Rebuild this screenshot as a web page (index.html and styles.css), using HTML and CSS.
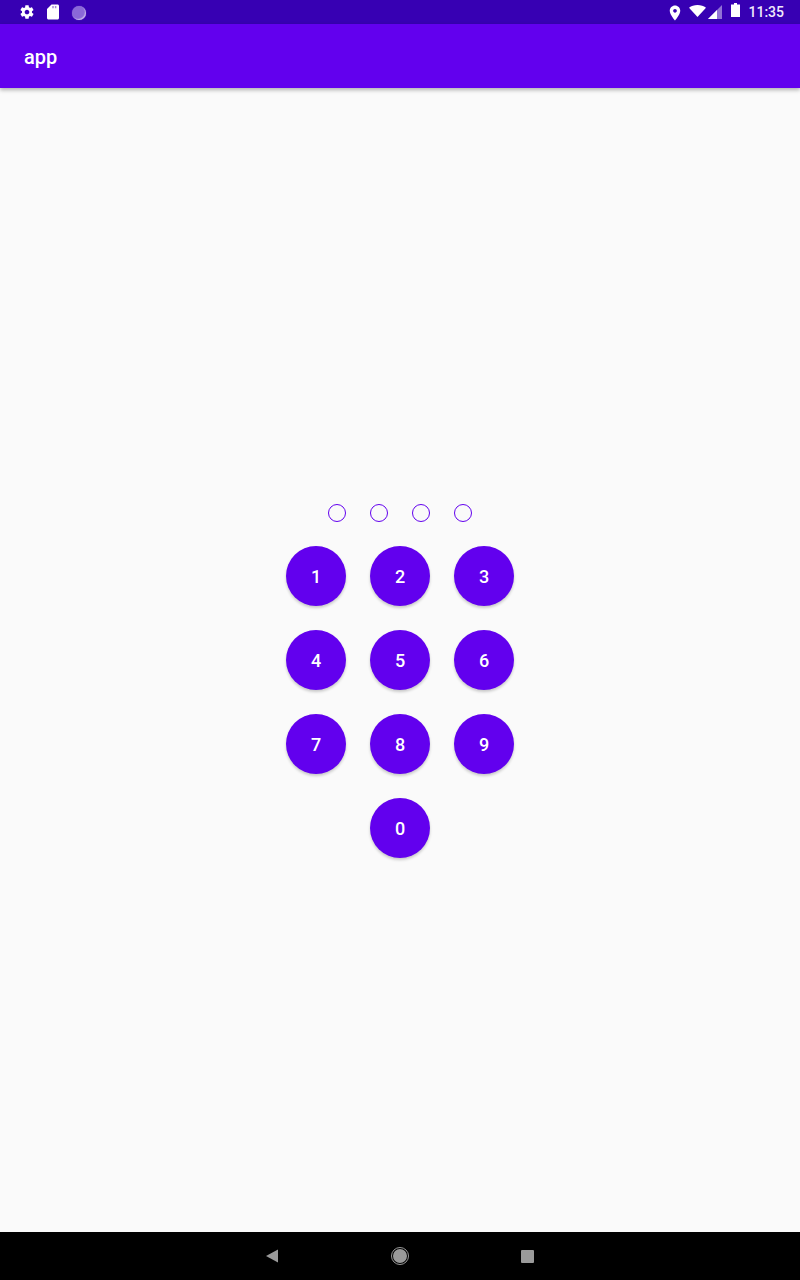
FILE: index.html
```html
<!DOCTYPE html>
<html lang="en">
<head>
  <meta charset="UTF-8">
  <title>app</title>
  <link rel="stylesheet" href="styles.css">
</head>
<body>
  <div class="screen">
    <div class="status-bar">
      <div class="status-left">
        <svg class="icon" width="16" height="16" viewBox="0 0 24 24"><path fill="#fff" d="M19.4 13c.04-.32.07-.66.07-1s-.03-.68-.07-1l2.11-1.65c.19-.15.24-.42.12-.64l-2-3.46c-.12-.22-.39-.3-.61-.22l-2.49 1c-.52-.4-1.08-.73-1.69-.98l-.38-2.65C14.46 2.18 14.25 2 14 2h-4c-.25 0-.46.18-.49.42l-.38 2.65c-.61.25-1.17.59-1.69.98l-2.49-1c-.23-.09-.49 0-.61.22l-2 3.46c-.13.22-.07.49.12.64L4.57 11c-.04.32-.07.66-.07 1s.03.68.07 1l-2.11 1.65c-.19.15-.24.42-.12.64l2 3.46c.12.22.39.3.61.22l2.49-1c.52.4 1.08.73 1.69.98l.38 2.65c.03.24.24.42.49.42h4c.25 0 .46-.18.49-.42l.38-2.65c.61-.25 1.17-.59 1.69-.98l2.49 1c.23.09.49 0 .61-.22l2-3.46c.12-.22.07-.49-.12-.64L19.4 13zM12 15.5c-1.93 0-3.5-1.57-3.5-3.5s1.57-3.5 3.5-3.5 3.5 1.57 3.5 3.5-1.57 3.5-3.5 3.5z"/></svg>
        <svg class="icon" width="18" height="18" viewBox="0 0 24 24"><path fill="#fff" d="M18 2h-8L4 8v12c0 1.1.9 2 2 2h12c1.1 0 2-.9 2-2V4c0-1.100-.9-2-2-2z"/><rect x="11" y="4" width="2" height="3" fill="#a58ad8"/><rect x="14.500" y="4" width="2" height="3" fill="#a58ad8"/></svg>
        <span class="sync-dot"></span>
      </div>
      <div class="status-right">
        <svg class="icon pin" width="18" height="18" viewBox="0 0 24 24"><path fill="#fff" d="M12 2C8.130 2 5 5.130 5 9c0 5.250 7 13 7 13s7-7.750 7-13c0-3.870-3.130-7-7-7zm0 9.500c-1.380 0-2.500-1.120-2.500-2.500s1.120-2.500 2.500-2.500 2.500 1.120 2.500 2.500-1.120 2.500-2.500 2.500z"/></svg>
        <svg class="icon wifi" width="17" height="12" viewBox="0 0 17 12"><path fill="#fff" d="M8.500 12L0 2.700C2.300 1 5.200 0 8.500 0s6.200 1 8.500 2.700z"/></svg>
        <svg class="icon signal" width="14" height="14" viewBox="0 0 14 14"><path fill="#fff" fill-opacity="0.45" d="M14 0v14H0z"/><path fill="#fff" d="M9 5v9H0z"/></svg>
        <svg class="icon battery" width="9" height="14" viewBox="0 0 9 14"><path fill="#fff" d="M3 0h3v1.500h3V14H0V1.500h3z"/></svg>
        <span class="clock">11:35</span>
      </div>
    </div>

    <header class="app-bar">app</header>

    <main class="content">
      <div class="pin-dots">
        <span class="dot"></span>
        <span class="dot"></span>
        <span class="dot"></span>
        <span class="dot"></span>
      </div>
      <div class="keypad">
        <button class="key">1</button>
        <button class="key">2</button>
        <button class="key">3</button>
        <button class="key">4</button>
        <button class="key">5</button>
        <button class="key">6</button>
        <button class="key">7</button>
        <button class="key">8</button>
        <button class="key">9</button>
        <button class="key key-zero">0</button>
      </div>
    </main>

    <div class="nav-bar">
      <svg width="13" height="16" viewBox="0 0 13 16"><path fill="#9a9a9a" d="M12 1.500v13L0 8z"/></svg>
      <span class="nav-home"></span>
      <span class="nav-recent"></span>
    </div>
  </div>
</body>
</html>
```

FILE: styles.css
```css
* {
  box-sizing: border-box;
}

body {
  margin: 0;
  font-family: Roboto, sans-serif;
  background-color: #fafafa;
}

.screen {
  display: flex;
  flex-direction: column;
  height: 1280px;
  overflow: hidden;
}

.status-bar {
  display: flex;
  justify-content: space-between;
  align-items: center;
  height: 24px;
  flex: none;
  padding: 0 16px 0 19px;
  background-color: #3700b3;
  color: #fff;
}

.status-left,
.status-right {
  display: flex;
  align-items: center;
}

.status-left {
  gap: 9px;
}

.icon {
  display: block;
}

.sync-dot {
  width: 14px;
  height: 14px;
  margin: 1px 0 0 1px;
  border-radius: 50%;
  background-color: #8a68d8;
  box-shadow: inset -1px -1px 1px rgba(255, 255, 255, 0.5), 0 0 1px rgba(255, 255, 255, 0.4);
}

.pin {
  margin-top: 1px;
}

.wifi {
  margin: 0 0 2px 5px;
}

.signal {
  margin-left: 2px;
}

.battery {
  margin: 0 0 4px 9px;
}

.clock {
  margin-left: 8px;
  font-size: 14px;
  font-weight: 500;
  color: #efe9fb;
}

.app-bar {
  display: flex;
  align-items: center;
  height: 64px;
  flex: none;
  padding: 2px 0 0 24px;
  background-color: #6200ee;
  color: #fff;
  font-size: 20px;
  font-weight: 500;
  box-shadow: 0 2px 4px rgba(0, 0, 0, 0.3);
  position: relative;
}

.content {
  flex: 1;
  display: flex;
  flex-direction: column;
  align-items: center;
  gap: 24px;
  padding-top: 416px;
}

.pin-dots {
  display: flex;
  gap: 24px;
}

.dot {
  width: 18px;
  height: 18px;
  border: 1px solid #6200ee;
  border-radius: 50%;
}

.keypad {
  display: grid;
  grid-template-columns: repeat(3, 60px);
  grid-auto-rows: 60px;
  gap: 24px;
}

.key {
  padding: 0;
  border: none;
  border-radius: 50%;
  background-color: #6200ee;
  color: #fff;
  font-family: Roboto, sans-serif;
  font-size: 18px;
  font-weight: 500;
  box-shadow: 0 2px 3px rgba(0, 0, 0, 0.2);
}

.key-zero {
  grid-column: 2;
}

.nav-bar {
  display: flex;
  align-items: center;
  justify-content: center;
  gap: 112px;
  height: 48px;
  flex: none;
  background-color: #000;
}

.nav-home {
  width: 18px;
  height: 18px;
  border-radius: 50%;
  background-color: #9a9a9a;
  border: 2px solid #000;
  outline: 1px solid #9a9a9a;
  outline-offset: -1px;
}

.nav-recent {
  width: 13px;
  height: 13px;
  border-radius: 1px;
  background-color: #9a9a9a;
}
```
